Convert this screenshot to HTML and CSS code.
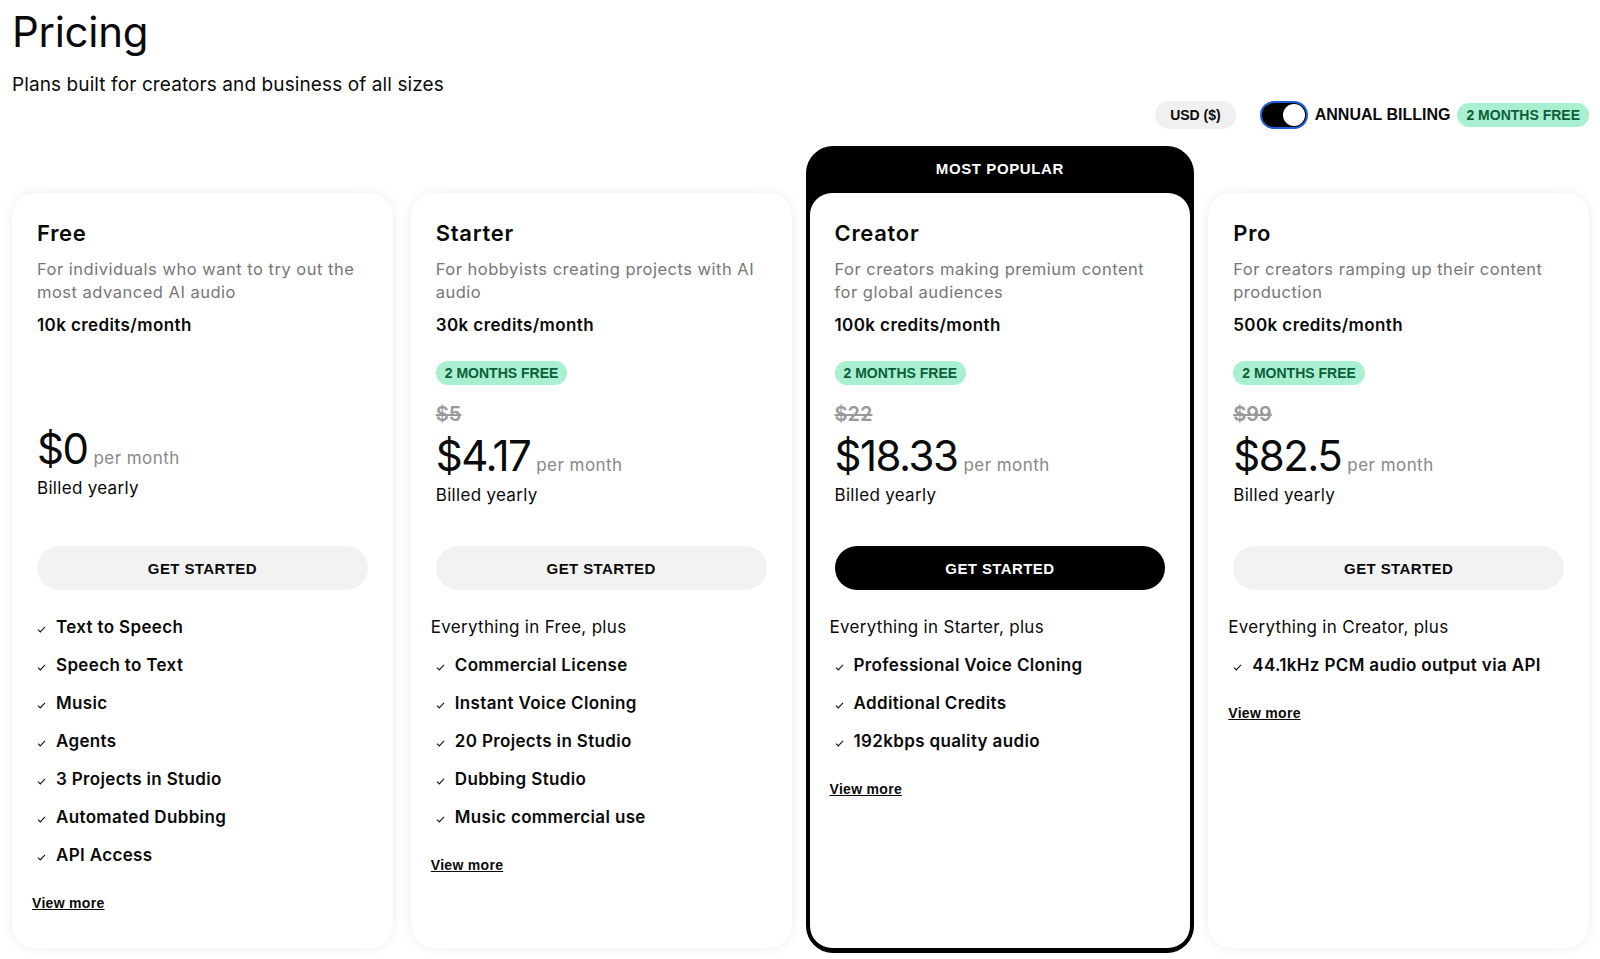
FILE: index.html
```html
<!DOCTYPE html>
<html lang="en">
<head>
    <meta charset="UTF-8">
    <meta name="viewport" content="width=device-width, initial-scale=1.0">
    <title>Pricing</title>
    <link rel="stylesheet" href="styles.css">
</head>
<body>
    <div class="page">
        <h1>Pricing</h1>
        <p class="subtitle">Plans built for creators and business of all sizes</p>

        <div class="toolbar">
            <span class="currency">USD ($)</span>
            <span class="toggle"><span class="knob"></span></span>
            <span class="billing">ANNUAL BILLING</span>
            <span class="badge">2 MONTHS FREE</span>
        </div>

        <div class="plans">
            <!-- Free -->
            <div class="card">
                <div class="top">
                    <h2>Free</h2>
                    <p class="desc">For individuals who want to try out the most advanced AI audio</p>
                    <p class="credits">10k credits/month</p>
                    <div class="pricing">
                        <div class="price price-free"><span class="amount">$0</span><span class="per">per month</span></div>
                        <p class="billed">Billed yearly</p>
                    </div>
                    <button class="btn">GET STARTED</button>
                </div>
                <ul class="features">
                    <li><svg class="check" viewBox="0 0 10 8"><path d="M1 4.2 L3.6 6.8 L9 1"/></svg>Text to Speech</li>
                    <li><svg class="check" viewBox="0 0 10 8"><path d="M1 4.2 L3.6 6.8 L9 1"/></svg>Speech to Text</li>
                    <li><svg class="check" viewBox="0 0 10 8"><path d="M1 4.2 L3.6 6.8 L9 1"/></svg>Music</li>
                    <li><svg class="check" viewBox="0 0 10 8"><path d="M1 4.2 L3.6 6.8 L9 1"/></svg>Agents</li>
                    <li><svg class="check" viewBox="0 0 10 8"><path d="M1 4.2 L3.6 6.8 L9 1"/></svg>3 Projects in Studio</li>
                    <li><svg class="check" viewBox="0 0 10 8"><path d="M1 4.2 L3.6 6.8 L9 1"/></svg>Automated Dubbing</li>
                    <li><svg class="check" viewBox="0 0 10 8"><path d="M1 4.2 L3.6 6.8 L9 1"/></svg>API Access</li>
                </ul>
                <a href="#" class="more">View more</a>
            </div>

            <!-- Starter -->
            <div class="card">
                <div class="top">
                    <h2>Starter</h2>
                    <p class="desc">For hobbyists creating projects with AI audio</p>
                    <p class="credits">30k credits/month</p>
                    <div class="pricing">
                        <span class="badge">2 MONTHS FREE</span>
                        <p class="old">$5</p>
                        <div class="price"><span class="amount">$4.17</span><span class="per">per month</span></div>
                        <p class="billed">Billed yearly</p>
                    </div>
                    <button class="btn">GET STARTED</button>
                </div>
                <ul class="features">
                    <li class="plus">Everything in Free, plus</li>
                    <li><svg class="check" viewBox="0 0 10 8"><path d="M1 4.2 L3.6 6.8 L9 1"/></svg>Commercial License</li>
                    <li><svg class="check" viewBox="0 0 10 8"><path d="M1 4.2 L3.6 6.8 L9 1"/></svg>Instant Voice Cloning</li>
                    <li><svg class="check" viewBox="0 0 10 8"><path d="M1 4.2 L3.6 6.8 L9 1"/></svg>20 Projects in Studio</li>
                    <li><svg class="check" viewBox="0 0 10 8"><path d="M1 4.2 L3.6 6.8 L9 1"/></svg>Dubbing Studio</li>
                    <li><svg class="check" viewBox="0 0 10 8"><path d="M1 4.2 L3.6 6.8 L9 1"/></svg>Music commercial use</li>
                </ul>
                <a href="#" class="more">View more</a>
            </div>

            <!-- Creator -->
            <div class="popular">
                <div class="popular-label">MOST POPULAR</div>
                <div class="card card-inner">
                    <div class="top">
                        <h2>Creator</h2>
                        <p class="desc">For creators making premium content for global audiences</p>
                        <p class="credits">100k credits/month</p>
                        <div class="pricing">
                            <span class="badge">2 MONTHS FREE</span>
                            <p class="old">$22</p>
                            <div class="price"><span class="amount">$18.33</span><span class="per">per month</span></div>
                            <p class="billed">Billed yearly</p>
                        </div>
                        <button class="btn btn-dark">GET STARTED</button>
                    </div>
                    <ul class="features">
                        <li class="plus">Everything in Starter, plus</li>
                        <li><svg class="check" viewBox="0 0 10 8"><path d="M1 4.2 L3.6 6.8 L9 1"/></svg>Professional Voice Cloning</li>
                        <li><svg class="check" viewBox="0 0 10 8"><path d="M1 4.2 L3.6 6.8 L9 1"/></svg>Additional Credits</li>
                        <li><svg class="check" viewBox="0 0 10 8"><path d="M1 4.2 L3.6 6.8 L9 1"/></svg>192kbps quality audio</li>
                    </ul>
                    <a href="#" class="more">View more</a>
                </div>
            </div>

            <!-- Pro -->
            <div class="card">
                <div class="top">
                    <h2>Pro</h2>
                    <p class="desc">For creators ramping up their content production</p>
                    <p class="credits">500k credits/month</p>
                    <div class="pricing">
                        <span class="badge">2 MONTHS FREE</span>
                        <p class="old">$99</p>
                        <div class="price"><span class="amount">$82.5</span><span class="per">per month</span></div>
                        <p class="billed">Billed yearly</p>
                    </div>
                    <button class="btn">GET STARTED</button>
                </div>
                <ul class="features">
                    <li class="plus">Everything in Creator, plus</li>
                    <li><svg class="check" viewBox="0 0 10 8"><path d="M1 4.2 L3.6 6.8 L9 1"/></svg>44.1kHz PCM audio output via API</li>
                </ul>
                <a href="#" class="more">View more</a>
            </div>
        </div>
    </div>
</body>
</html>
```

FILE: styles.css
```css
body {
    margin: 0;
    padding: 0;
    min-height: 100vh;
    background: #ffffff;
    color: #0a0a0a;
    font-family: Inter, "Noto Sans", sans-serif;
}

.page {
    padding: 7px 11px 0 12px;
}

h1 {
    margin: 0;
    font-size: 42px;
    font-weight: 400;
    line-height: 49px;
    letter-spacing: -0.3px;
}

.subtitle {
    margin: 15px 0 0;
    font-size: 19px;
    line-height: 28px;
    letter-spacing: 0.1px;
}

/* billing switcher */
.toolbar {
    display: flex;
    justify-content: flex-end;
    align-items: center;
    height: 28px;
    margin-top: 2px;
}

.currency {
    display: inline-flex;
    align-items: center;
    height: 28px;
    padding: 0 15px;
    border-radius: 14px;
    background: #f0f0f0;
    font-family: "Liberation Sans", Arial, sans-serif;
    font-size: 14px;
    font-weight: bold;
}

.toggle {
    display: flex;
    justify-content: flex-end;
    align-items: center;
    box-sizing: border-box;
    width: 48px;
    height: 28px;
    margin-left: 24px;
    padding: 0 1px;
    border: 2px solid #1d5fd6;
    border-radius: 14px;
    background: #000;
}

.knob {
    width: 22px;
    height: 22px;
    border-radius: 50%;
    background: #fff;
}

.billing {
    margin: 0 7px;
    font-family: "Liberation Sans", Arial, sans-serif;
    font-size: 16px;
    font-weight: bold;
}

.badge {
    display: inline-flex;
    align-items: center;
    height: 24px;
    padding: 0 9px;
    border-radius: 12px;
    background: #a8f0cf;
    color: #0c5e3b;
    font-family: "Liberation Sans", Arial, sans-serif;
    font-size: 14px;
    font-weight: bold;
}

/* plan cards */
.plans {
    display: grid;
    grid-template-columns: repeat(4, 1fr);
    column-gap: 18px;
    margin-top: 17px;
}

.card {
    margin-top: 47px;
    padding: 26px 20px 35px;
    border-radius: 24px;
    background: #fff;
    box-shadow: 0 0 12px rgba(0, 0, 0, 0.08);
}

.popular {
    display: flex;
    flex-direction: column;
    margin: 0 -4px -5px;
    padding: 0 4px 5px;
    border-radius: 27px;
    background: #000;
}

.popular-label {
    height: 47px;
    line-height: 46px;
    text-align: center;
    color: #fff;
    font-family: "Liberation Sans", Arial, sans-serif;
    font-size: 15px;
    font-weight: bold;
    letter-spacing: 0.6px;
}

.card-inner {
    flex: 1;
    margin-top: 0;
    border-radius: 22px;
    box-shadow: none;
}

.top {
    padding: 0 5px;
}

.top h2 {
    margin: 0;
    font-size: 22px;
    font-weight: 600;
    line-height: 28px;
    letter-spacing: 0.7px;
}

.desc {
    margin: 11px 0 0;
    font-size: 16.5px;
    line-height: 23px;
    color: #777;
    letter-spacing: 0.5px;
}

.credits {
    margin: 10px 0 0;
    font-size: 17px;
    font-weight: 600;
    line-height: 23px;
    letter-spacing: 0.4px;
}

.pricing {
    display: flex;
    flex-direction: column;
    align-items: flex-start;
    height: 185px;
    margin-top: 24px;
}

.old {
    margin: 15px 0 0;
    font-size: 20px;
    font-weight: 600;
    line-height: 28px;
    color: #9a9a9a;
    text-decoration: line-through;
}

.price {
    display: flex;
    align-items: baseline;
    margin-top: 7px;
    line-height: 42px;
}

.price-free {
    margin-top: 67px;
}

.amount {
    font-size: 42px;
    letter-spacing: -1.5px;
}

.per {
    margin-left: 6px;
    font-size: 17px;
    color: #888;
    letter-spacing: 0.45px;
}

.billed {
    margin: -2px 0 0;
    font-size: 17px;
    line-height: 23px;
    letter-spacing: 0.3px;
}

.btn {
    display: block;
    width: 100%;
    height: 44px;
    border: none;
    border-radius: 22px;
    background: #f2f2f2;
    color: #0a0a0a;
    font-family: "Liberation Sans", Arial, sans-serif;
    font-size: 15px;
    font-weight: bold;
    letter-spacing: 0.4px;
    cursor: pointer;
}

.btn-dark {
    background: #000;
    color: #fff;
}

.features {
    list-style: none;
    margin: 18px 0 0;
    padding: 0;
}

.features li {
    display: flex;
    align-items: baseline;
    padding: 7px 5px;
    font-size: 17px;
    font-weight: 600;
    line-height: 24px;
    letter-spacing: 0.35px;
}

.features li.plus {
    padding-left: 0;
    font-weight: 400;
    letter-spacing: 0.3px;
}

.check {
    flex: none;
    width: 9px;
    height: 7px;
    margin-right: 10px;
    fill: none;
    stroke: #111;
    stroke-width: 1.2;
}

.more {
    display: block;
    width: fit-content;
    margin-top: 19px;
    color: #0a0a0a;
    font-family: "Liberation Sans", Arial, sans-serif;
    font-size: 14px;
    font-weight: bold;
    line-height: 20px;
    letter-spacing: 0.3px;
}
```
